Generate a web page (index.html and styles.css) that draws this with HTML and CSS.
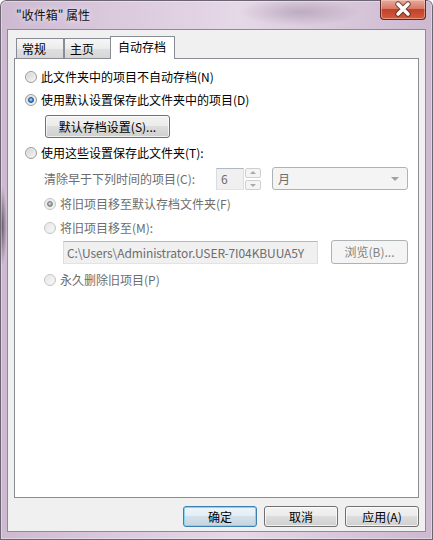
FILE: index.html
```html
<!DOCTYPE html>
<html lang="zh-CN">
  <head>
    <meta charset="UTF-8" />
    <title>"收件箱" 属性</title>
    <link rel="stylesheet" href="styles.css">
  </head>
  <body>
    <div class="window">
      <div class="titlebar">
        <span class="title">"收件箱" 属性</span>
        <div class="close-btn">
          <svg width="46" height="20" viewBox="0 0 46 20">
            <path d="M18 5 L28 15 M28 5 L18 15" stroke="#3a1a1a" stroke-width="5.5" stroke-linecap="round" fill="none" opacity="0.6" />
            <path d="M18 5 L28 15 M28 5 L18 15" stroke="#ffffff" stroke-width="3.5" stroke-linecap="round" fill="none" />
          </svg>
        </div>
      </div>

      <div class="client">
        <div class="tabs">
          <div class="tab">常规</div>
          <div class="tab">主页</div>
          <div class="tab active">自动存档</div>
        </div>

        <div class="panel">
          <label class="option"><span class="radio"></span>此文件夹中的项目不自动存档(N)</label>
          <label class="option mt7"><span class="radio checked"></span>使用默认设置保存此文件夹中的项目(D)</label>
          <div class="mt7 indent-btn">
            <button class="btn btn-wide">默认存档设置(S)...</button>
          </div>
          <label class="option mt7"><span class="radio"></span>使用这些设置保存此文件夹(T):</label>

          <div class="sub disabled">
            <div class="row-clean mt6">
              <span class="row-label">清除早于下列时间的项目(C):</span>
              <span class="spin-input">6</span>
              <span class="spin-buttons">
                <span class="spin-up"></span>
                <span class="spin-down"></span>
              </span>
              <span class="combo">月<span class="combo-arrow"></span></span>
            </div>
            <label class="option mt6"><span class="radio checked"></span>将旧项目移至默认存档文件夹(F)</label>
            <label class="option mt8"><span class="radio"></span>将旧项目移至(M):</label>
            <div class="row-path mt4">
              <span class="path-input"><span class="path-text">C:\Users\Administrator.USER-7I04KBUUA5Y</span></span>
              <span class="btn btn-disabled btn-browse">浏览(B)...</span>
            </div>
            <label class="option mt8"><span class="radio"></span>永久删除旧项目(P)</label>
          </div>
        </div>

        <div class="footer">
          <button class="btn btn-default">确定</button>
          <button class="btn">取消</button>
          <button class="btn">应用(A)</button>
        </div>
      </div>
    </div>
  </body>
</html>
```

FILE: styles.css
```css
/* Grundlæggende */
body {
  margin: 0;
  padding: 0;
  font-family: "Noto Sans CJK SC", "Noto Sans", sans-serif;
  font-size: 12px;
  line-height: 16px;
  color: #000;
}

/* Vindue og ramme */
.window {
  width: 433px;
  height: 540px;
  box-sizing: border-box;
  border-radius: 6px 6px 0 0;
  overflow: hidden;
  background:
    radial-gradient(ellipse 5px 40px at 2px 226px, rgba(70, 60, 72, 0.75), transparent),
    radial-gradient(ellipse 60px 14px at 300px 12px, rgba(150, 130, 155, 0.45), transparent),
    linear-gradient(to right, #cdbad1, #dac8dd 25%, #e5d8e7 55%, #d8c6db 80%, #ccb9d0);
  box-shadow: inset 0 0 0 1px #6d6672, inset 0 0 0 2px rgba(255, 255, 255, 0.35);
}

.titlebar {
  height: 29px;
  display: flex;
  align-items: center;
  justify-content: space-between;
}

.title {
  margin-left: 16px;
  margin-top: 1px;
  color: #111;
  text-shadow: 0 0 6px rgba(255, 255, 255, 0.9);
}

.close-btn {
  align-self: flex-start;
  width: 46px;
  height: 20px;
  margin-right: 7px;
  box-sizing: border-box;
  border: 1px solid #5b2a2a;
  border-top: none;
  border-radius: 0 0 4px 4px;
  background: linear-gradient(#e9a99a, #d67a68 45%, #c2412b 50%, #d45c3c);
  box-shadow: inset 0 0 0 1px rgba(255, 220, 210, 0.45);
}

.close-btn svg {
  display: block;
  margin: -1px 0 0 -1px;
}

/* Klientområde */
.client {
  height: 503px;
  margin: 0 7px;
  box-sizing: border-box;
  border: 1px solid #8c8a92;
  background-color: #f0f0f0;
  padding: 6px 6px 0 6px;
}

/* Faner */
.tabs {
  display: flex;
  align-items: flex-end;
  height: 23px;
  padding-left: 2px;
  margin-bottom: -1px;
  position: relative;
  z-index: 1;
}

.tab {
  width: 48px;
  height: 21px;
  box-sizing: border-box;
  padding-left: 5px;
  border: 1px solid #898c95;
  background: linear-gradient(#f6f6f6, #ececec 50%, #e0e0e0 51%, #d6d6d6);
  line-height: 20px;
}

.tab.active {
  width: 65px;
  height: 23px;
  margin-left: -2px;
  padding-left: 7px;
  border-bottom: none;
  background: #fff;
  line-height: 19px;
  position: relative;
  z-index: 2;
}

.panel {
  height: 440px;
  box-sizing: border-box;
  border: 1px solid #898c95;
  background-color: #fff;
  padding: 10px 0 0 10px;
}

/* Valgmuligheder */
.option {
  display: flex;
  align-items: center;
  height: 16px;
  white-space: nowrap;
}

.radio {
  width: 12px;
  height: 12px;
  box-sizing: border-box;
  margin-right: 4px;
  border-radius: 50%;
  border: 1px solid #9a9a9a;
  background: linear-gradient(135deg, #cfcfcf, #f9f9f9);
  box-shadow: inset 0 0 0 1px #efefef;
  position: relative;
  flex-shrink: 0;
}

.radio.checked::after {
  content: "";
  position: absolute;
  left: 2px;
  top: 2px;
  width: 6px;
  height: 6px;
  box-sizing: border-box;
  border-radius: 50%;
  border: 1px solid #1d4f86;
  background: radial-gradient(circle at 45% 40%, #b9ecff, #3d95dc 55%, #1c5aa0);
}

.mt4 { margin-top: 4px; }
.mt6 { margin-top: 6px; }
.mt7 { margin-top: 7px; }
.mt8 { margin-top: 8px; }

.indent-btn {
  padding-left: 20px;
}

/* Knapper */
.btn {
  width: 74px;
  height: 21px;
  box-sizing: border-box;
  padding: 0;
  border: 1px solid #707070;
  border-radius: 3px;
  background: linear-gradient(#f3f3f3, #ebebeb 48%, #dddddd 50%, #cfcfcf);
  box-shadow: inset 0 0 0 1px rgba(255, 255, 255, 0.7);
  font-family: inherit;
  font-size: 12px;
  line-height: 17px;
  color: #000;
  text-align: center;
  display: inline-block;
}

.btn-wide {
  width: 125px;
  height: 23px;
  line-height: 19px;
}

.btn-default {
  border-color: #3c7fb1;
  background: linear-gradient(#eef5f9, #e3edf3 48%, #d2e0e9 50%, #c5d6e1);
  box-shadow: inset 0 0 0 1px #88d3f2;
}

.btn-disabled {
  border-color: #adb2b5;
  background: #f4f4f4;
  box-shadow: none;
  color: #838383;
}

/* Deaktiveret område */
.sub {
  padding-left: 19px;
}

.disabled {
  color: #6d6d6d;
}

.disabled .radio {
  border-color: #c4c4c4;
  background: linear-gradient(135deg, #e4e4e4, #fbfbfb);
}

.disabled .radio.checked::after {
  border-color: #7d7d7d;
  background: radial-gradient(circle at 45% 40%, #e6e6e6, #a0a0a0 55%, #808080);
}

.row-clean {
  display: flex;
  align-items: center;
  height: 23px;
}

.row-label {
  width: 172px;
  flex-shrink: 0;
}

.spin-input,
.path-input {
  box-sizing: border-box;
  border: 1px solid;
  border-color: #adb9c6 #d5dde5 #dde4eb #d5dde5;
  background-color: #f0f0f0;
  color: #6d6d6d;
}

.spin-input {
  width: 28px;
  height: 22px;
  padding-left: 4px;
  line-height: 20px;
}

.spin-buttons {
  width: 16px;
  height: 22px;
  margin-left: 1px;
  display: flex;
  flex-direction: column;
  justify-content: space-between;
}

.spin-up,
.spin-down {
  height: 10px;
  box-sizing: border-box;
  border: 1px solid #cfcfcf;
  border-radius: 2px;
  background: #f4f4f4;
  position: relative;
}

.spin-up::after,
.spin-down::after {
  content: "";
  position: absolute;
  left: 4px;
  top: 2px;
  border-left: 3px solid transparent;
  border-right: 3px solid transparent;
}

.spin-up::after {
  border-bottom: 3px solid #a8a8a8;
}

.spin-down::after {
  top: 3px;
  border-top: 3px solid #a8a8a8;
}

.combo {
  width: 136px;
  height: 23px;
  margin-left: 11px;
  box-sizing: border-box;
  padding-left: 5px;
  border: 1px solid #adb2b5;
  border-radius: 3px;
  background: #f4f4f4;
  line-height: 21px;
  position: relative;
}

.combo-arrow {
  position: absolute;
  right: 8px;
  top: 9px;
  border-left: 4px solid transparent;
  border-right: 4px solid transparent;
  border-top: 4px solid #a0a0a0;
}

.row-path {
  display: flex;
  align-items: center;
  height: 24px;
  padding-left: 19px;
}

.path-input {
  width: 255px;
  height: 23px;
  flex-shrink: 0;
  padding-left: 3px;
  line-height: 21px;
  white-space: nowrap;
  overflow: hidden;
}

.path-text {
  letter-spacing: -0.1px;
}

.btn-browse {
  width: 77px;
  height: 24px;
  margin-left: 13px;
  line-height: 22px;
}

/* Bund */
.footer {
  display: flex;
  justify-content: flex-end;
  gap: 7px;
  margin-top: 8px;
}
```
